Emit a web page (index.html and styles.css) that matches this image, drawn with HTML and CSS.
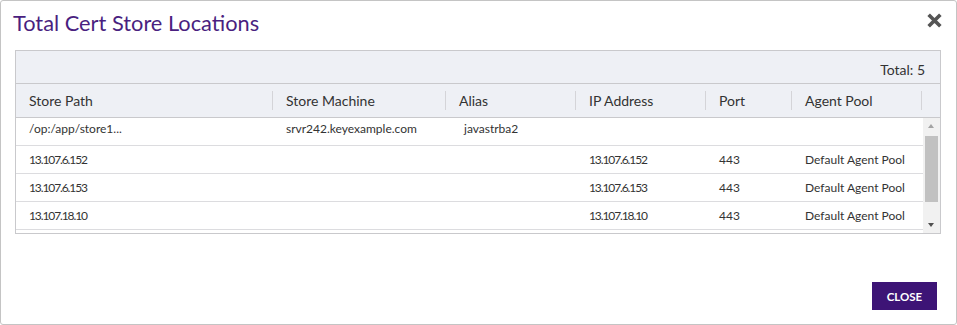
FILE: index.html
```html
<!DOCTYPE html>
<html lang="en">
<head>
    <meta charset="UTF-8">
    <title>Total Cert Store Locations</title>
    <link rel="stylesheet" href="styles.css">
</head>
<body>
    <div class="modal" role="dialog" aria-labelledby="modal-title">
        <header class="modal-header">
            <h1 id="modal-title" class="modal-title">Total Cert Store Locations</h1>
            <button type="button" class="modal-x" aria-label="Close">
                <svg width="17" height="17" viewBox="0 0 16 16" aria-hidden="true">
                    <path d="M2.5 2.5 L13.5 13.5 M13.5 2.5 L2.5 13.5" stroke="#555" stroke-width="3.4" stroke-linecap="butt"/>
                </svg>
            </button>
        </header>

        <div class="grid">
            <div class="grid-toolbar">Total: 5</div>
            <div class="grid-head">
                <div class="cell">Store Path</div>
                <div class="cell">Store Machine</div>
                <div class="cell">Alias</div>
                <div class="cell">IP Address</div>
                <div class="cell">Port</div>
                <div class="cell">Agent Pool</div>
                <div class="cell cell-spacer"></div>
            </div>
            <div class="grid-body">
                <div class="rows">
                    <div class="row row-first">
                        <div class="cell">/op:/app/store1...</div>
                        <div class="cell">srvr242.keyexample.com</div>
                        <div class="cell cell-indent">javastrba2</div>
                        <div class="cell"></div>
                        <div class="cell"></div>
                        <div class="cell"></div>
                    </div>
                    <div class="row">
                        <div class="cell num">13.107.6.152</div>
                        <div class="cell"></div>
                        <div class="cell"></div>
                        <div class="cell num">13.107.6.152</div>
                        <div class="cell">443</div>
                        <div class="cell">Default Agent Pool</div>
                    </div>
                    <div class="row">
                        <div class="cell num">13.107.6.153</div>
                        <div class="cell"></div>
                        <div class="cell"></div>
                        <div class="cell num">13.107.6.153</div>
                        <div class="cell">443</div>
                        <div class="cell">Default Agent Pool</div>
                    </div>
                    <div class="row">
                        <div class="cell num">13.107.18.10</div>
                        <div class="cell"></div>
                        <div class="cell"></div>
                        <div class="cell num">13.107.18.10</div>
                        <div class="cell">443</div>
                        <div class="cell">Default Agent Pool</div>
                    </div>
                </div>
                <div class="scrollbar" aria-hidden="true">
                    <span class="arrow arrow-up"></span>
                    <span class="thumb"></span>
                    <span class="arrow arrow-down"></span>
                </div>
            </div>
        </div>

        <footer class="modal-footer">
            <button type="button" class="btn-close">CLOSE</button>
        </footer>
    </div>
</body>
</html>
```

FILE: styles.css
```css
:root {
    --brand: #3d1476;
    --title: #4a1f80;
    --line: #c9c9cc;
    --row-line: #dcdcdf;
    --head-bg: #eef0f5;
    --text: #333;
}

* {
    box-sizing: border-box;
}

body {
    margin: 0;
    font-family: 'Lato', 'Open Sans', sans-serif;
    color: var(--text);
    background: #fff;
}

.modal {
    width: 957px;
    height: 325px;
    border: 1px solid #c4c4c4;
    border-radius: 3px;
    background: #fff;
    display: flex;
    flex-direction: column;
}

.modal-header {
    display: flex;
    justify-content: space-between;
    align-items: flex-start;
    padding: 10px 13px 0 12px;
    height: 49px;
}

.modal-title {
    margin: 0;
    font-size: 21.8px;
    font-weight: 400;
    color: var(--title);
    line-height: 24px;
}

.modal-x {
    border: none;
    background: none;
    padding: 0;
    margin-top: 1px;
    cursor: pointer;
    line-height: 0;
}

.grid {
    margin: 0 15px 0 14px;
    border: 1px solid var(--line);
    height: 184px;
    display: flex;
    flex-direction: column;
}

.grid-toolbar {
    height: 33px;
    background: var(--head-bg);
    border-bottom: 1px solid var(--line);
    text-align: right;
    padding: 11px 15px 0 0;
    font-size: 14px;
    line-height: 16px;
}

.grid-head,
.row {
    display: grid;
    grid-template-columns: 257px 173px 130px 130px 86px 130px 18px;
}

.row {
    grid-template-columns: 257px 173px 130px 130px 86px 130px;
}

.grid-head {
    height: 34px;
    background: var(--head-bg);
    border-bottom: 1px solid var(--line);
    font-size: 14px;
}

.grid-head .cell {
    padding: 0 0 0 13px;
    line-height: 33px;
    position: relative;
}

.grid-head .cell::after {
    content: "";
    position: absolute;
    right: 0;
    top: 7px;
    height: 19px;
    border-right: 1px solid #d4d4d8;
}

.grid-head .cell-spacer::after {
    display: none;
}

.grid-body {
    flex: 1;
    display: flex;
    overflow: hidden;
}

.rows {
    flex: 1;
}

.row {
    height: 28px;
    border-bottom: 1px solid var(--row-line);
    font-size: 12px;
}

.row .cell {
    padding: 0 0 0 13px;
    line-height: 27px;
    white-space: nowrap;
}

.row .num {
    letter-spacing: -1.1px;
}

.row-first .cell {
    line-height: 22px;
}

.cell-indent {
    padding-left: 18px !important;
}

.scrollbar {
    width: 17px;
    background: #f1f1f1;
    display: flex;
    flex-direction: column;
    align-items: center;
    padding: 0 1px 0 0;
}

.arrow {
    width: 0;
    height: 0;
    border-left: 3.5px solid transparent;
    border-right: 3.5px solid transparent;
    margin: 6px 0;
}

.arrow-up {
    border-bottom: 4px solid #a3a3a3;
}

.arrow-down {
    border-top: 4px solid #505050;
    margin-top: auto;
}

.thumb {
    width: 13px;
    height: 66px;
    background: #c1c1c1;
    margin-top: 2px;
}

.modal-footer {
    margin-top: auto;
    display: flex;
    justify-content: flex-end;
    padding: 0 19px 14px 0;
}

.btn-close {
    width: 65px;
    height: 28px;
    border: none;
    background: var(--brand);
    color: #fff;
    font-family: 'Lato', sans-serif;
    font-weight: 700;
    font-size: 11.5px;
    cursor: pointer;
}
```
